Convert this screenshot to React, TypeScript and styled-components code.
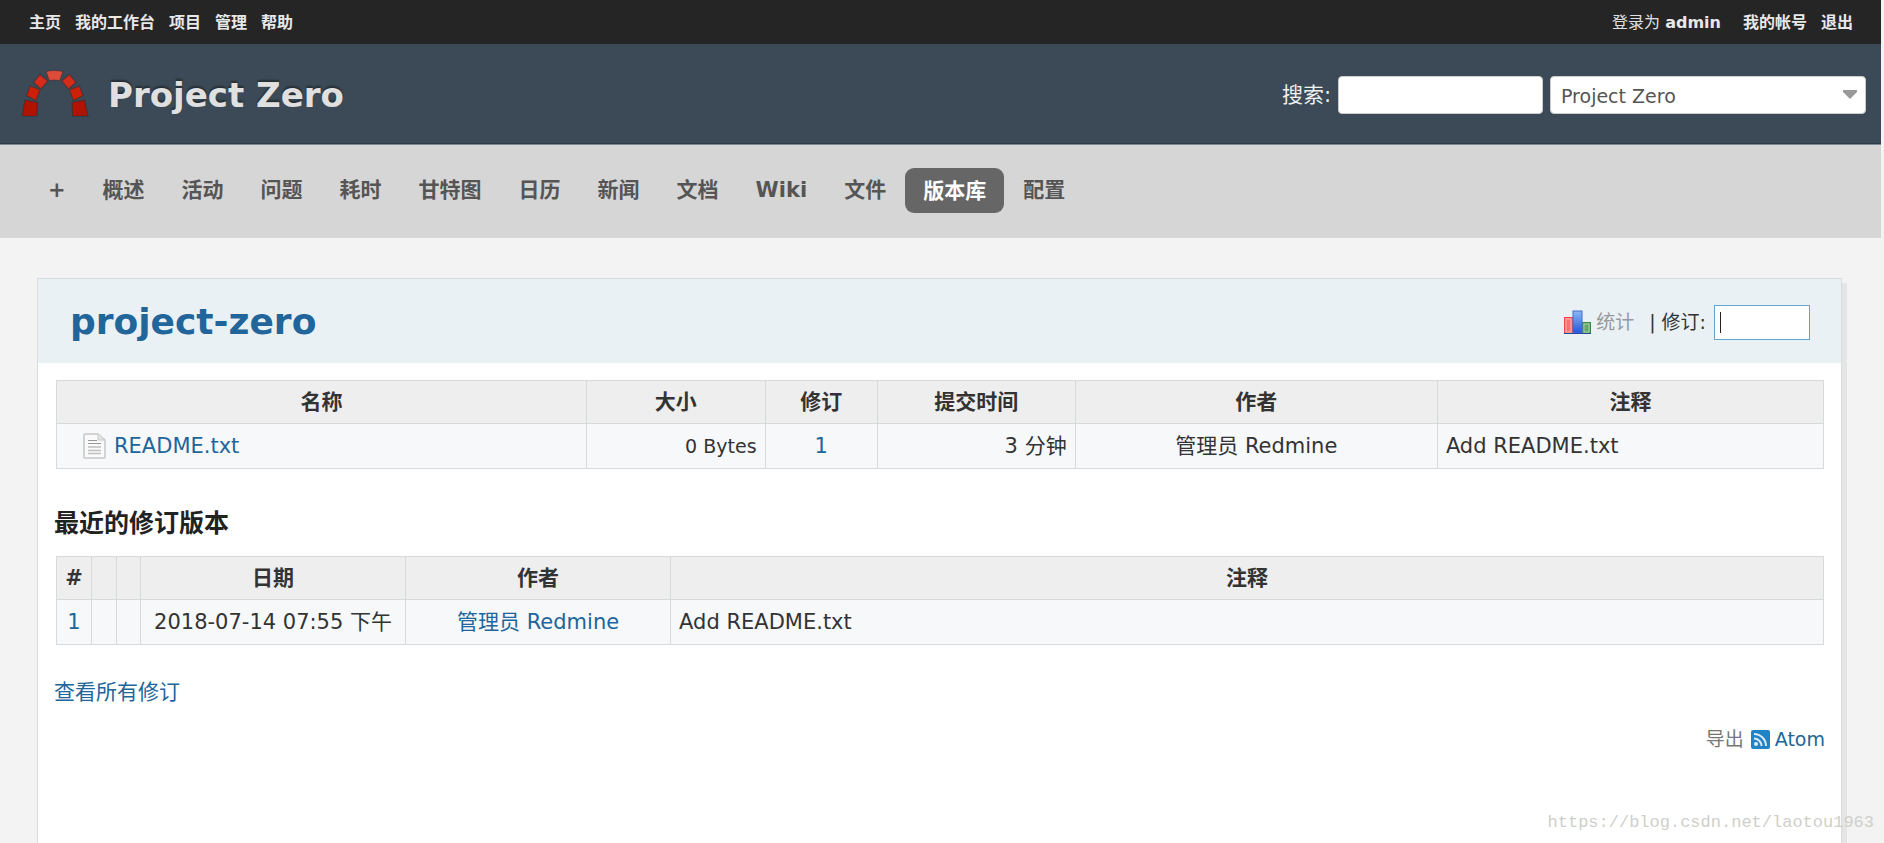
import React from "react";
import styled, { createGlobalStyle, css } from "styled-components";

const sans = `Verdana, "DejaVu Sans", "Noto Sans CJK SC", sans-serif`;

const GlobalStyle = createGlobalStyle`
  *, *::before, *::after { box-sizing: border-box; }
  html { background: #f3f3f3; }
  body {
    margin: 0;
    padding-right: 3px;
    background: #f3f3f3;
    color: #333;
    font-family: ${sans};
    font-size: 21px;
    line-height: 28px;
  }
  input, select, button { font: inherit; color: inherit; margin: 0; }
  #root { min-height: 100vh; display: flex; flex-direction: column; }
`;

const Page = styled.div`
  flex: 1;
  display: flex;
  flex-direction: column;
`;

const TopMenu = styled.div`
  display: flex;
  justify-content: space-between;
  align-items: center;
  height: 44px;
  padding: 2px 28px 0 29px;
  background: #252525;
  color: #e0e0e0;
  font-size: 16px;
  line-height: 24px;
`;

const MenuGroup = styled.div`
  display: flex;
  align-items: center;
  gap: 14px;
`;

const LoggedAs = styled.span`
  margin-right: 8px;
`;

const TopLink = styled.a`
  color: #e8e8e8;
  font-weight: bold;
  text-decoration: none;
`;

const Header = styled.header`
  display: flex;
  align-items: center;
  height: 101px;
  padding: 2px 15px 0 21px;
  background: #3b4a56;
  border-bottom: 1px solid #7d8790;
  box-shadow: inset 0 -1px 0 #2f3d49;
`;

const ProjectTitle = styled.h1`
  flex: 1;
  margin: 0 0 0 19px;
  color: #e0e0e0;
  font-size: 34px;
  line-height: 44px;
  text-shadow: 0 -2px 2px rgba(0, 0, 0, 0.4);
`;

const Search = styled.form`
  display: flex;
  align-items: center;
  gap: 7px;
  color: #f0f0f0;
`;

const fieldBox = css`
  height: 38px;
  border: 1px solid #ccc;
  border-radius: 4px;
  background-color: #fff;
`;

const SearchInput = styled.input`
  ${fieldBox}
  width: 205px;
  padding: 0 10px;
`;

const SelectWrap = styled.div`
  position: relative;
  width: 316px;
`;

const ProjectSelect = styled.select`
  ${fieldBox}
  display: block;
  width: 100%;
  padding: 2px 10px 0;
  color: #555;
  font-size: 19px;
  appearance: none;
`;

const SelectArrow = styled.svg`
  position: absolute;
  right: 9px;
  top: 14px;
  pointer-events: none;
`;

const MainMenu = styled.nav`
  display: flex;
  align-items: center;
  gap: 1px;
  height: 93px;
  padding: 0 30px 2px;
  background: #d6d6d6;
`;

const Tab = styled.a<{ $selected?: boolean }>`
  padding: ${(p) => (p.$selected ? "9px 18px 8px" : "8px 18px 9px")};
  border-radius: 9px;
  color: ${(p) => (p.$selected ? "#fff" : "#555")};
  background: ${(p) => (p.$selected ? "#666" : "transparent")};
  font-weight: bold;
  text-decoration: none;
`;

const Content = styled.main`
  flex: 1;
  margin: 40px 39px 0 37px;
  border: 1px solid #d9dcdd;
  border-bottom: 0;
  background: #fff;
  box-shadow: 5px 5px 0 #e5e5e5;
`;

const RepoBar = styled.div`
  display: flex;
  justify-content: space-between;
  align-items: center;
  height: 84px;
  padding: 2px 31px 0 32px;
  background: #e9f1f5;
`;

const RepoTitle = styled.h2`
  margin: 0;
  color: #21659b;
  font-size: 36px;
  line-height: 48px;
`;

const Contextual = styled.form`
  display: flex;
  align-items: center;
  font-size: 19px;
`;

const StatsLink = styled.a`
  display: flex;
  align-items: center;
  gap: 5px;
  margin-right: 15px;
  color: #999;
  text-decoration: none;
`;

const RevisionLabel = styled.label`
  display: flex;
  align-items: center;
  gap: 8px;
`;

const RevisionInput = styled.input`
  width: 96px;
  height: 35px;
  padding: 0 5px;
  border: 1px solid #5fa6cb;
  background: #fff linear-gradient(#222, #222) 5px center / 1px 21px no-repeat;
  caret-color: transparent;
  outline: 0;
`;

const Body = styled.div`
  padding: 17px 16px 40px;
`;

const DataTable = styled.table`
  width: calc(100% - 3px);
  margin-left: 2px;
  table-layout: fixed;
  border-collapse: collapse;
  border: 1px solid #d7dadb;
`;

const HeadCell = styled.th`
  height: 43px;
  padding: 0 8px;
  border: 1px solid #d7dadb;
  background: #eee;
  white-space: nowrap;
`;

const Cell = styled.td<{ $align?: "left" | "center" | "right"; $small?: boolean }>`
  height: 45px;
  padding: 0 8px;
  border: 1px solid #d7dadb;
  background: #f6f8fa;
  font-size: ${(p) => (p.$small ? "19px" : "21px")};
  text-align: ${(p) => p.$align ?? "center"};
  white-space: nowrap;
`;

const Link = styled.a`
  color: #21659b;
  text-decoration: none;
`;

const FileLink = styled(Link)`
  display: flex;
  align-items: center;
  gap: 8px;
  padding-left: 18px;
`;

const SectionTitle = styled.h3`
  margin: 37px 0 14px;
  color: #222;
  font-size: 25px;
  line-height: 36px;
`;

const AllRevisions = styled.p`
  margin: 33px 0 19px;
`;

const Export = styled.p`
  display: flex;
  justify-content: flex-end;
  align-items: center;
  gap: 7px;
  margin: 0;
  color: #777;
  font-size: 19px;
`;

const FeedLink = styled(Link)`
  display: flex;
  align-items: center;
  gap: 5px;
`;

const Watermark = styled.div`
  position: absolute;
  right: 10px;
  top: 809px;
  color: #cfcfca;
  font-family: "Liberation Mono", monospace;
  font-size: 17px;
  line-height: 28px;
`;

const Logo = () => (
  <svg width="68" height="52" viewBox="0 0 68 52" aria-hidden="true">
    <g stroke="#262b33" strokeOpacity="0.45" strokeWidth="1.2" strokeLinejoin="round">
      <path d="M25 2.500Q33.500 0.500 42 2.500L38.800 11.500Q33.500 10.500 28.200 11.500z" fill="#dd4b39" />
      <path d="M19 5.500L26.800 12L20 20L12.500 13.300z" fill="#d62c1a" />
      <path d="M48.500 5.500L40.700 12L47.500 20L55 13.300z" fill="#d62c1a" />
      <path d="M9 17L19 20.800L15.200 31.500L5.500 26.700z" fill="#cc2108" />
      <path d="M58.500 17L48.500 20.800L52.300 31.500L62 26.700z" fill="#cc2108" />
      <path d="M4 31L16.500 33.500L15.800 47H1z" fill="#b01300" />
      <path d="M63.500 31L51 33.500L51.700 47H67z" fill="#b01300" />
    </g>
  </svg>
);

const StatsIcon = () => (
  <svg width="27" height="24" viewBox="0 0 27 24" aria-hidden="true">
    <defs>
      <linearGradient id="blueBar" x1="0" y1="0" x2="0" y2="1">
        <stop offset="0" stopColor="#8db8f2" />
        <stop offset="1" stopColor="#2455dc" />
      </linearGradient>
    </defs>
    <rect x="0.5" y="7.5" width="8" height="16" fill="#ff6f6f" stroke="#f04848" />
    <rect x="2" y="9" width="5" height="13" fill="none" stroke="#ffb5b5" />
    <rect x="18.5" y="12.5" width="8" height="11" fill="#62a868" stroke="#3f8848" />
    <rect x="20" y="14" width="5" height="8" fill="none" stroke="#a5d0a5" />
    <rect x="9" y="1" width="9" height="22" fill="url(#blueBar)" stroke="#3f6fd0" />
    <path d="M0 23.5h27" stroke="#27459a" />
  </svg>
);

const FileIcon = () => (
  <svg width="23" height="26" viewBox="0 0 23 26" aria-hidden="true">
    <path d="M2 1h13l7 6v17a1 1 0 0 1-1 1H2a1 1 0 0 1-1-1V2a1 1 0 0 1 1-1z" fill="#fafafa" stroke="#c6c6c6" strokeWidth="1.500" />
    <path d="M15 1v6h6" fill="#e6e6e6" stroke="#c6c6c6" />
    <path d="M5 7.500h9M5 10.500h13" stroke="#999" />
    <path d="M5 14h13M5 17.500h13M5 20.500h13" stroke="#c0c0c0" strokeWidth="1.300" />
  </svg>
);

const FeedIcon = () => (
  <svg width="19" height="19" viewBox="0 0 19 19" aria-hidden="true">
    <rect width="19" height="19" rx="2" fill="#1f83c6" />
    <circle cx="5" cy="14" r="2" fill="#dcebf7" />
    <path d="M3 8.500a7.500 7.500 0 0 1 7.500 7.500M3 4a12 12 0 0 1 12 12" fill="none" stroke="#dcebf7" strokeWidth="2" />
  </svg>
);

const tabs = ["+", "概述", "活动", "问题", "耗时", "甘特图", "日历", "新闻", "文档", "Wiki", "文件", "版本库", "配置"];

export default function App() {
  return (
    <Page>
      <GlobalStyle />
      <TopMenu>
        <MenuGroup>
          {["主页", "我的工作台", "项目", "管理", "帮助"].map((t) => (
            <TopLink href="#" key={t}>{t}</TopLink>
          ))}
        </MenuGroup>
        <MenuGroup>
          <LoggedAs>登录为 <TopLink href="#">admin</TopLink></LoggedAs>
          <TopLink href="#">我的帐号</TopLink>
          <TopLink href="#">退出</TopLink>
        </MenuGroup>
      </TopMenu>
      <Header>
        <Logo />
        <ProjectTitle>Project Zero</ProjectTitle>
        <Search>
          <label htmlFor="q">搜索:</label>
          <SearchInput id="q" type="text" />
          <SelectWrap>
            <ProjectSelect aria-label="Project">
              <option>Project Zero</option>
            </ProjectSelect>
            <SelectArrow width="14" height="9" viewBox="0 0 14 9" aria-hidden="true">
              <path d="M0 0h14v2L7 9 0 2z" fill="#999" />
            </SelectArrow>
          </SelectWrap>
        </Search>
      </Header>
      <MainMenu>
        {tabs.map((t) => (
          <Tab href="#" key={t} $selected={t === "版本库"}>{t}</Tab>
        ))}
      </MainMenu>
      <Content>
        <RepoBar>
          <RepoTitle>project-zero</RepoTitle>
          <Contextual>
            <StatsLink href="#"><StatsIcon />统计</StatsLink>
            <RevisionLabel>
              <span>| 修订:</span>
              <RevisionInput type="text" autoFocus />
            </RevisionLabel>
          </Contextual>
        </RepoBar>
        <Body>
          <DataTable>
            <colgroup>
              <col style={{ width: "30%" }} />
              <col style={{ width: "10.1%" }} />
              <col style={{ width: "6.35%" }} />
              <col style={{ width: "11.2%" }} />
              <col style={{ width: "20.5%" }} />
              <col />
            </colgroup>
            <thead>
              <tr>
                {["名称", "大小", "修订", "提交时间", "作者", "注释"].map((h) => (
                  <HeadCell key={h}>{h}</HeadCell>
                ))}
              </tr>
            </thead>
            <tbody>
              <tr>
                <Cell $align="left"><FileLink href="#"><FileIcon />README.txt</FileLink></Cell>
                <Cell $align="right" $small>0 Bytes</Cell>
                <Cell><Link href="#">1</Link></Cell>
                <Cell $align="right">3 分钟</Cell>
                <Cell>管理员 Redmine</Cell>
                <Cell $align="left">Add README.txt</Cell>
              </tr>
            </tbody>
          </DataTable>
          <SectionTitle>最近的修订版本</SectionTitle>
          <DataTable>
            <colgroup>
              <col style={{ width: "35px" }} />
              <col style={{ width: "25px" }} />
              <col style={{ width: "24px" }} />
              <col style={{ width: "15%" }} />
              <col style={{ width: "15%" }} />
              <col />
            </colgroup>
            <thead>
              <tr>
                {["#", "", "", "日期", "作者", "注释"].map((h, i) => (
                  <HeadCell key={i}>{h}</HeadCell>
                ))}
              </tr>
            </thead>
            <tbody>
              <tr>
                <Cell><Link href="#">1</Link></Cell>
                <Cell />
                <Cell />
                <Cell>2018-07-14 07:55 下午</Cell>
                <Cell><Link href="#">管理员 Redmine</Link></Cell>
                <Cell $align="left">Add README.txt</Cell>
              </tr>
            </tbody>
          </DataTable>
          <AllRevisions><Link href="#">查看所有修订</Link></AllRevisions>
          <Export>导出 <FeedLink href="#"><FeedIcon />Atom</FeedLink></Export>
        </Body>
      </Content>
      <Watermark>https://blog.csdn.net/laotou1963</Watermark>
    </Page>
  );
}
